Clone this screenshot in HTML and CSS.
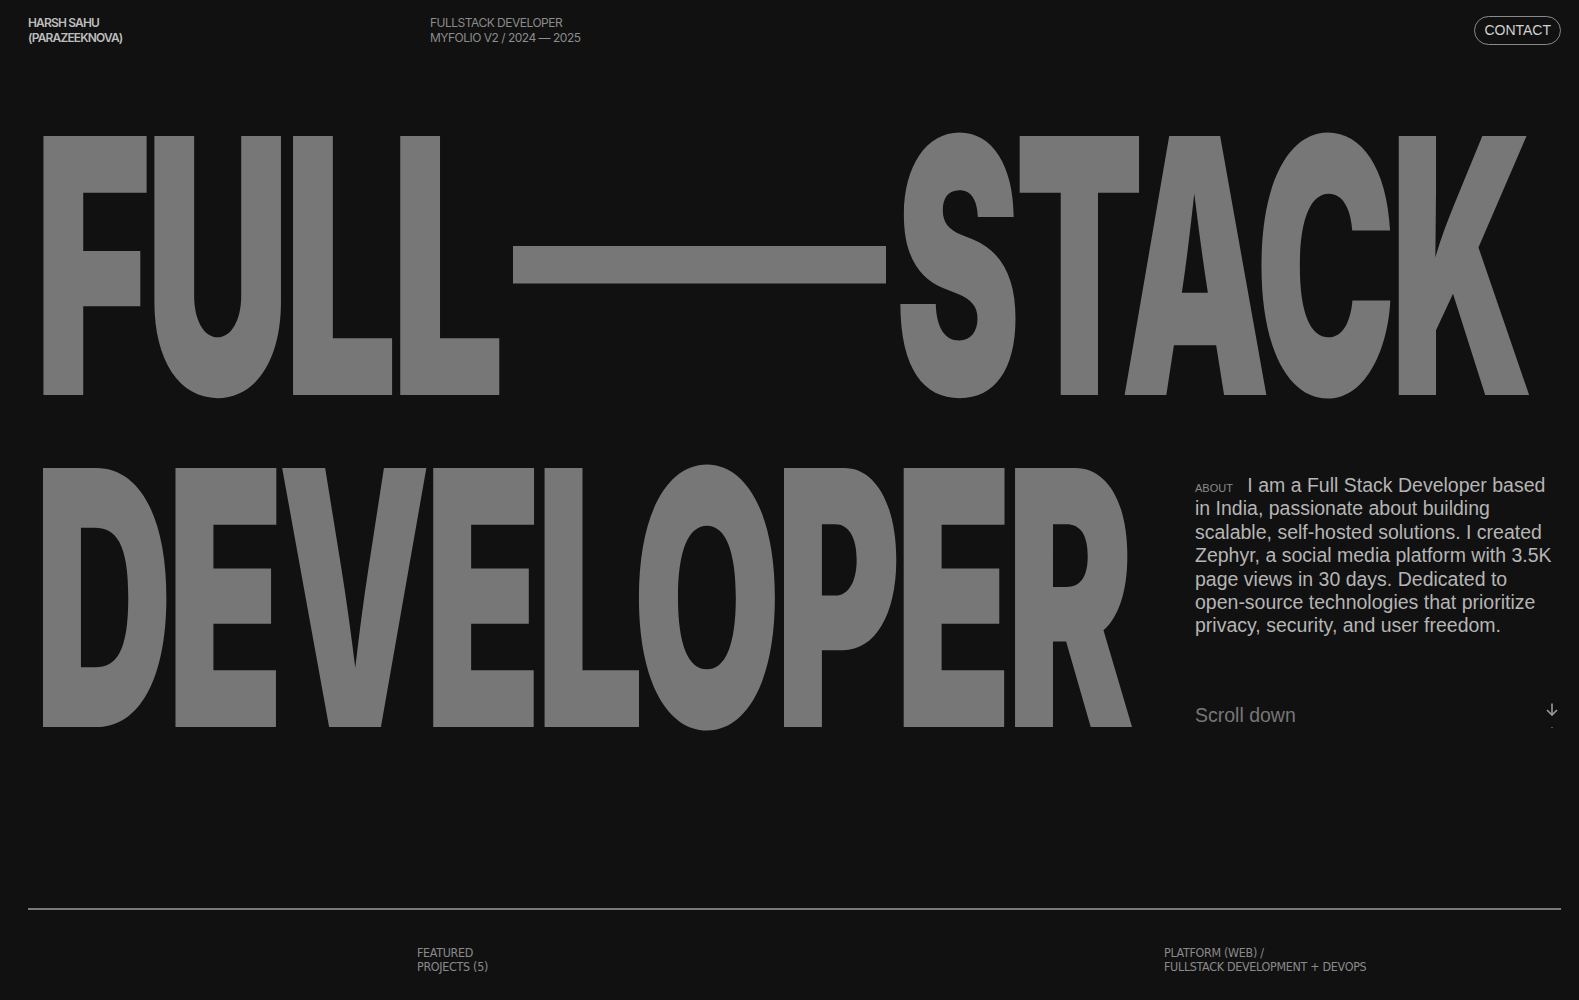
FILE: index.html
```html
<!DOCTYPE html>
<html lang="en">
<head>
<meta charset="utf-8">
<title>Harsh Sahu — Fullstack Developer</title>
<link rel="stylesheet" href="styles.css">
</head>
<body>
<div class="page">
  <header class="top">
    <div class="ident">HARSH SAHU<br>(PARAZEEKNOVA)</div>
    <div class="role">FULLSTACK DEVELOPER<br>MYFOLIO V2 / 2024 — 2025</div>
    <a class="contact" href="#contact">CONTACT</a>
  </header>

  <main class="hero">
    <h1 class="title">
      <svg class="line line-1" width="1533" height="275" viewBox="0 0 1533 275" aria-label="FULL—STACK">
        <text class="big tight" x="6" y="267" textLength="464" lengthAdjust="spacingAndGlyphs">FULL</text>
        <text class="big dash" x="485" y="210" textLength="373" lengthAdjust="spacingAndGlyphs">—</text>
        <text class="big tight" x="867" y="267" textLength="632" lengthAdjust="spacingAndGlyphs">STACK</text>
      </svg>
      <svg class="line line-2" width="1167" height="280" viewBox="0 0 1167 280" aria-label="DEVELOPER">
        <text class="big tight" x="6" y="269" textLength="1094" lengthAdjust="spacingAndGlyphs">DEVELOPER</text>
      </svg>
    </h1>
    <aside class="about">
      <p class="about-text"><span class="label">ABOUT</span> I am a Full Stack Developer based in India, passionate about building scalable, self-hosted solutions. I created Zephyr, a social media platform with 3.5K page views in 30 days. Dedicated to open-source technologies that prioritize privacy, security, and user freedom.</p>
      <div class="scroll">
        <span class="scroll-text">Scroll down</span>
        <span class="scroll-icon">
          <svg width="12" height="13" viewBox="0 0 12 13" aria-hidden="true">
            <path d="M6 0.5V12M1 7l5 5 5-5" fill="none" stroke="#9a9a9a" stroke-width="1.6"/>
          </svg>
          <span class="dot"></span>
        </span>
      </div>
    </aside>
  </main>

  <hr class="divider">

  <footer class="meta">
    <div class="meta-cell"></div>
    <div class="meta-cell">FEATURED<br>PROJECTS (5)</div>
    <div class="meta-cell">PLATFORM (WEB) /<br>FULLSTACK DEVELOPMENT + DEVOPS</div>
  </footer>
</div>
</body>
</html>
```

FILE: styles.css
```css
html, body {
  margin: 0;
  padding: 0;
  background: #111111;
}

body {
  width: 1579px;
  height: 1000px;
  overflow: hidden;
  font-family: "Inter", "Liberation Sans", sans-serif;
  color: #8a8a8a;
}

.page {
  padding: 0 18px 0 28px;
}

/* header */
.top {
  display: grid;
  grid-template-columns: 402px 1fr auto;
  padding-top: 15px;
  font-size: 12px;
  line-height: 15px;
  letter-spacing: -0.5px;
}

.ident {
  font-weight: 600;
  color: #bdbdbd;
  letter-spacing: -0.85px;
}

.role {
  font-weight: 400;
  color: #8c8c8c;
}

.contact {
  align-self: start;
  margin-top: 1px;
  box-sizing: border-box;
  height: 29px;
  padding: 0 9px;
  border: 1px solid #8a8a8a;
  border-radius: 999px;
  font-family: "Liberation Sans", Arial, sans-serif;
  font-size: 14px;
  line-height: 27px;
  letter-spacing: 0;
  color: #d2d2d2;
  text-decoration: none;
}

/* hero */
.hero {
  display: grid;
  grid-template-columns: 1167px 1fr;
  grid-template-areas:
    "l1 l1"
    "l2 about";
  row-gap: 55px;
  margin-top: 83px;
}

.title {
  display: contents;
  margin: 0;
}

.line {
  display: block;
  overflow: visible;
}

.line-1 { grid-area: l1; }
.line-2 { grid-area: l2; }

.big {
  font-family: "Inter", "Liberation Sans", sans-serif;
  font-weight: 900;
  font-size: 356px;
  fill: #777777;
}

.big.tight {
  letter-spacing: -12px;
}

.big.dash {
  font-size: 253px;
}

.about {
  grid-area: about;
  padding-top: 16px;
}

.about-text {
  margin: 0;
  font-family: "Liberation Sans", Arial, sans-serif;
  font-size: 19.5px;
  line-height: 23.4px;
  color: #b5b5b5;
}

.label {
  font-size: 11px;
  line-height: 1;
  color: #8a8a8a;
  margin-right: 9px;
}

.scroll {
  display: flex;
  justify-content: space-between;
  align-items: flex-start;
  margin-top: 66px;
  font-family: "Liberation Sans", Arial, sans-serif;
  font-size: 19.5px;
  line-height: 23.4px;
  color: #777777;
}

.scroll-icon {
  display: flex;
  flex-direction: column;
  align-items: center;
  justify-content: space-between;
  height: 25px;
  margin-top: -1px;
  margin-right: 3px;
}

.scroll-icon svg {
  display: block;
}

.dot {
  display: block;
  width: 2px;
  height: 1px;
  background: #555555;
}

/* divider + footer meta */
.divider {
  margin: 170px 0 0;
  border: 0;
  height: 2px;
  background: #7a7a7a;
}

.meta {
  display: grid;
  grid-template-columns: 389px 747px 1fr;
  margin-top: 36px;
  font-family: "Liberation Sans Narrow", "DejaVu Sans Condensed", "Liberation Sans", sans-serif;
  font-size: 12.4px;
  line-height: 14px;
  letter-spacing: -0.3px;
  color: #8a8a8a;
}
```
